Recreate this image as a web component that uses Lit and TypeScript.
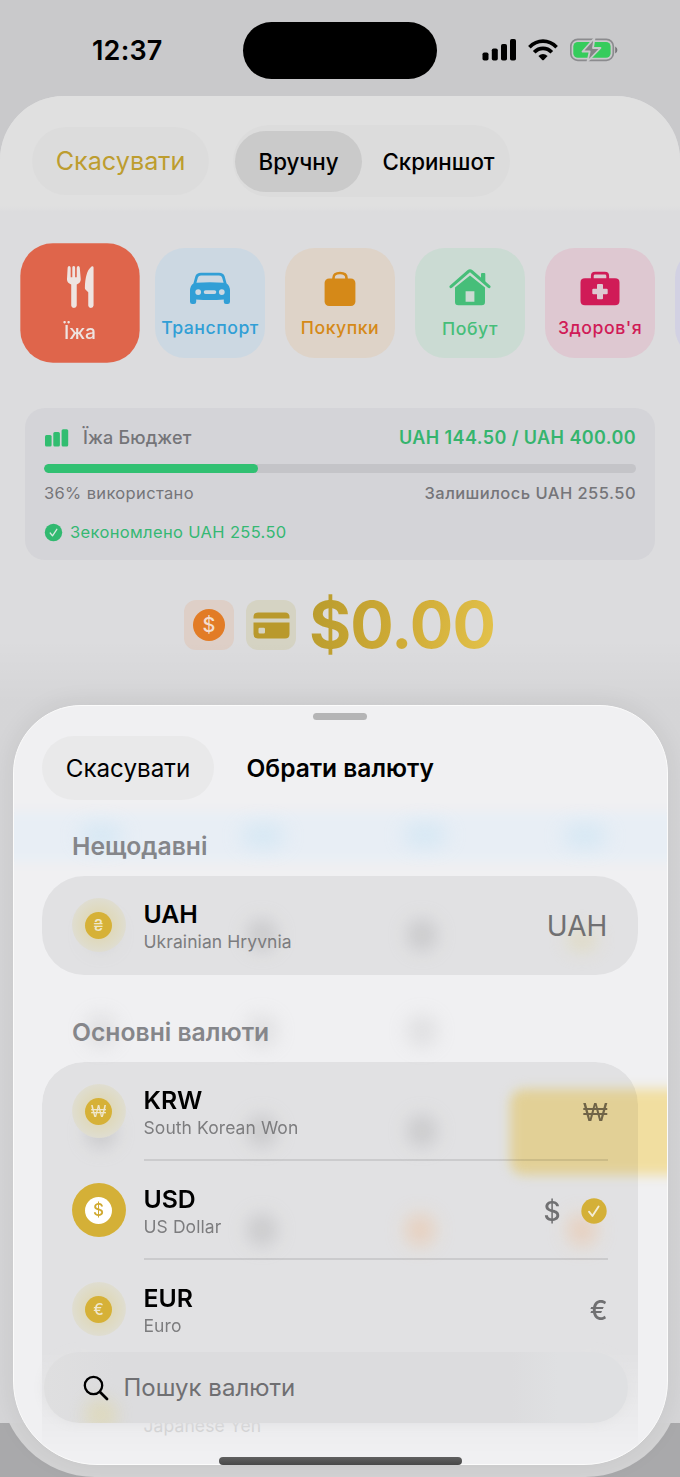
import { LitElement, html, css, svg, nothing } from "lit";
import { customElement, property } from "lit/decorators.js";
import { classMap } from "lit/directives/class-map.js";

const categoryIcons: Record<string, unknown> = {
  food: svg`<svg width="26" height="40" viewBox="0 0 26 40"><g fill="currentColor"><path d="M0.6 1.6Q.8 0 2 0T3.4 1.6V10.2H4.9V1.3Q5.1 0 6.2 0T7.5 1.3V10.2H9V1.6Q9.2 0 10.4 0T11.8 1.6L12.7 12.2Q12.7 15.6 9 17V36.3Q8.800 38.600 6.400 38.600T3.900 36.300V17Q0 15.600 0 12.200Z"/><path d="M24.500 1.200V36.300Q24.300 38.600 22 38.600T19.600 36.300V24L17 21.600Q16.400 21 16.500 19.600C16.800 11 18.200 4 22.600 .4Q24.200-.6 24.500 1.200Z"/></g></svg>`,
  car: svg`<svg width="42" height="33" viewBox="0 0 42 33"><path fill="currentColor" fill-rule="evenodd" d="M12 .8H30Q34.500.8 35.700 4.500L37.600 11.400Q41 13.800 41 18.800V29.700Q41 32 38.700 32H37Q34.800 32 34.800 29.700V27.400Q21 28.400 7.200 27.400V29.700Q7.200 32 5 32H3.300Q1 32 1 29.700V18.800Q1 13.800 4.400 11.400L6.300 4.500Q7.500.8 12 .8ZM12 3.600Q9.500 3.600 8.900 5.500L7.400 10.800Q21 9.800 34.600 10.800L33.100 5.500Q32.500 3.600 30 3.600ZM9.200 17.200A2.900 2.900 0 1 0 9.200 23A2.900 2.900 0 1 0 9.200 17.200ZM32.800 17.200A2.900 2.900 0 1 0 32.800 23A2.900 2.900 0 1 0 32.800 17.200ZM16.600 18.200A1.900 1.900 0 0 0 16.600 22H25.400A1.900 1.900 0 0 0 25.400 18.200Z"/></svg>`,
  bag: svg`<svg width="32" height="36" viewBox="0 0 32 36"><path d="M9.500 10V7Q9.500 2 16 2T22.500 7V10" fill="none" stroke="currentColor" stroke-width="2.600"/><rect x=".6" y="7.500" width="30.800" height="27.500" rx="4.500" fill="currentColor"/></svg>`,
  house: svg`<svg width="42" height="38" viewBox="0 0 42 38"><path d="M2 18.700L19.400 3.500Q21 2.100 22.600 3.500L40 18.700" fill="none" stroke="currentColor" stroke-width="3" stroke-linecap="round"/><path fill="currentColor" d="M32 6Q32 5 33 5H35.300Q36.300 5 36.300 6V14.500L32 10.700Z"/><path fill="currentColor" fill-rule="evenodd" d="M6 19.400L21 7.500L36 19.400V34Q36 37.300 32.700 37.300H9.300Q6 37.300 6 34ZM16.600 23.200V33.800H25.400V23.200Z"/></svg>`,
  kit: svg`<svg width="40" height="35" viewBox="0 0 40 35"><path d="M12.300 9V5Q12.300 2.200 15.100 2.200H24.900Q27.700 2.200 27.700 5V9" fill="none" stroke="currentColor" stroke-width="2.800"/><path fill="currentColor" fill-rule="evenodd" d="M5 7.300H35Q39.500 7.300 39.500 11.500V30Q39.500 34.200 35 34.200H5Q.5 34.200 .5 30V11.500Q.5 7.300 5 7.300ZM18 13Q17 13 17 14V17.700H13.300Q12.300 17.700 12.300 18.700V22.300Q12.300 23.300 13.300 23.300H17V27.300Q17 28.300 18 28.300H22Q23 28.300 23 27.300V23.300H26.700Q27.700 23.300 27.700 22.300V18.700Q27.700 17.700 26.700 17.700H23V14Q23 13 22 13Z"/></svg>`,
};

const categories = [
  { icon: "food", label: "Їжа" },
  { icon: "car", label: "Транспорт" },
  { icon: "bag", label: "Покупки" },
  { icon: "house", label: "Побут" },
  { icon: "kit", label: "Здоров'я" },
  { icon: "more", label: "" },
];

const currencies = [
  { code: "KRW", name: "South Korean Won", sign: "₩", selected: false },
  { code: "USD", name: "US Dollar", sign: "$", selected: true },
  { code: "EUR", name: "Euro", sign: "€", selected: false },
];

@customElement("currency-row")
class CurrencyRow extends LitElement {
  @property() code = "";
  @property() name = "";
  @property() sign = "";
  @property() mark = "";
  @property({ type: Boolean }) selected = false;

  static styles = css`
    :host { display: block; height: 99px; box-sizing: border-box; padding: 0 30px; }
    .row { display: flex; height: 100%; }
    .halo {
      align-self: center; width: 54px; height: 54px; border-radius: 50%; margin: 0 18px 1px 0;
      display: grid; place-items: center; background: radial-gradient(circle, #dfd8b8 30%, #dfdcca 60%, #dfddd2 72%);
    }
    .coin {
      width: 27px; height: 27px; border-radius: 50%; background: #d6b137; color: #efe7cd;
      display: grid; place-items: center; font-size: 15.500px; line-height: 27px; font-weight: 500;
    }
    .halo.on { background: #d4b037; }
    .on .coin { background: #fff; color: #d0a930; font-size: 17px; font-weight: 500; }
    .body { flex: 1; display: flex; align-items: center; box-sizing: border-box; }
    .names { flex: 1; padding-top: 4px; }
    .code { font-size: 24.800px; line-height: 28px; font-weight: 600; color: #000; }
    .name { font-size: 17.500px; line-height: 28px; letter-spacing: .08px; color: #7c7c7e; }
    .sign { font-size: 26.500px; line-height: 32px; font-weight: 500; color: #707072; }
    .code3 { font-size: 28px; font-weight: 400; letter-spacing: .1px; }
    .won { font-family: "Liberation Sans", sans-serif; font-size: 26px; font-weight: 400; color: #706447; }
    .coin.won { font-size: 16px; color: #efe7cd; }
    .check { margin-left: 20px; display: block; margin-right: 1px; }
  `;

  render() {
    const won = this.sign === "₩";
    return html`<div class="row">
      <div class=${classMap({ halo: true, on: this.selected })}><div class=${classMap({ coin: true, won })}>${this.mark || this.sign}</div></div>
      <div class="body">
        <div class="names"><div class="code">${this.code}</div><div class="name">${this.name}</div></div>
        <div class=${classMap({ sign: true, won, code3: this.sign.length > 1 })}>${this.sign}</div>
        ${this.selected
          ? html`<svg class="check" width="26" height="26" viewBox="0 0 26 26"><circle cx="13" cy="13" r="12.700" fill="#d4b037"/><path d="M8 13.700L11.400 18L17.600 8.500" fill="none" stroke="#f3ecd4" stroke-width="1.900" stroke-linecap="round" stroke-linejoin="round"/></svg>`
          : nothing}
      </div>
    </div>`;
  }
}

@customElement("app-root")
class AppRoot extends LitElement {
  static styles = css`
    :host {
      display: block; position: relative; width: 680px; height: 1477px; overflow: hidden;
      background: #c9c9cb; font-family: Inter, "Liberation Sans", sans-serif; color: #000;
    }
    * { box-sizing: border-box; }
    svg { display: block; }
    .status { display: flex; align-items: center; height: 96px; padding: 4px 62px 0 92px; }
    .time { width: 151px; font-size: 27px; font-weight: 600; line-height: 34px; letter-spacing: .2px; padding-top: 2px; }
    .island { width: 194px; height: 57px; border-radius: 29px; background: #000; }
    .signals { margin-left: auto; display: flex; align-items: center; gap: 12px; }

    .page { height: 1381px; background: #dcdcde; border-radius: 64px 64px 0 0; overflow: hidden; }
    .nav {
      display: flex; gap: 24px; height: 116px; padding: 31px 32px 0;
      background: linear-gradient(#e0e0e0 95%, #dcdcde);
    }
    .cancel {
      width: 177px; height: 68px; border-radius: 34px; background: #dcdcdc; color: #bd9d2f;
      font-size: 25.200px; line-height: 69px; text-align: center;
    }
    .segments { width: 277px; height: 72px; border-radius: 36px; background: #dcdcdc; display: flex; padding: 6px 2px; font-size: 22.300px; line-height: 62px; font-weight: 500; text-align: center; margin-top: -2px; }
    .seg { flex: 1; padding-left: 5px; }
    .seg.on { flex: 0 0 127px; height: 61px; border-radius: 31px; background: #cacaca; padding: 0; margin-right: 2px; }

    .tiles { display: flex; gap: 20px; padding: 36px 0 0 25px; width: 820px; }
    .tile {
      width: 110px; height: 110px; flex: none; border-radius: 30px; display: flex; flex-direction: column; align-items: center;
      font-size: 17.700px; font-weight: 500; white-space: nowrap; letter-spacing: .5px;
    }
    .glyph { height: 45px; margin-top: 18px; display: grid; place-items: center; }
    .label { line-height: 22px; margin-top: 6px; }
    .food { background: #df654b; color: #eee4e1; transform: scale(1.085); letter-spacing: 0; }
    .food .glyph { margin-top: 18px; padding-left: 2px; }
    .food .label { margin-top: 7.500px; }
    .car { background: #ccd8e2; color: #319fd6; }
    .bag { background: #ded3c8; color: #d58918; }
    .house { background: #cbdbd3; color: #46be79; }
    .house .glyph { margin-top: 16.500px; }
    .house .label { margin-top: 8.500px; }
    .kit { background: #dec8d1; color: #d01b57; }
    .more { background: #d2d1e3; }

    .budget { margin: 50px 25px 0; height: 152px; border-radius: 20px; background: #d4d4d8; padding: 15px 19px 0; color: #757579; }
    .line { display: flex; justify-content: space-between; align-items: center; }
    .heading { display: flex; align-items: center; gap: 14px; font-size: 18px; line-height: 29px; height: 28px; font-weight: 500; letter-spacing: .15px; }
    .heading svg { margin-top: 1px; }
    .total { color: #35b46e; font-size: 18px; font-weight: 600; letter-spacing: .4px; }
    .track { height: 9px; margin: 13px 0 8px; border-radius: 5px; background: #c4c4c8; overflow: hidden; }
    .fill { height: 100%; border-radius: 5px; background: #31c072; }
    .small { font-size: 16.500px; line-height: 23px; height: 24px; letter-spacing: .35px; }
    .left { font-weight: 500; letter-spacing: .45px; }
    .saved { display: flex; align-items: center; gap: 7px; margin-top: 15px; color: #35b873; }

    .amount { display: flex; align-items: center; justify-content: flex-start; gap: 12px; margin: 25px 0 0 184px; height: 80px; }
    .chip { width: 50px; height: 50px; border-radius: 12px; display: grid; place-items: center; background: #decfc7; }
    .chip.card { background: #d5d3c3; }
    .dollar { width: 32px; height: 32px; border-radius: 50%; background: #e27c26; color: #f3ded0; font-size: 20px; font-weight: 500; line-height: 32px; text-align: center; }
    .value {
      margin: -1px 0 0 1px; font-size: 64.500px; line-height: 80px; font-weight: 700; letter-spacing: -.9px;
      background: linear-gradient(105deg, #b89b2d, #cfab36 50%, #e4c34c); -webkit-background-clip: text; background-clip: text; color: transparent;
    }

    .shade { position: absolute; inset: 640px 0 0; background: linear-gradient(#0000, #00000008 60px); }
    .corners { position: absolute; left: 0; right: 0; top: 1423px; height: 54px; background: #a9a9ab; overflow: hidden; }
    .corners::before { content: ""; position: absolute; inset: -246px 0 0; border-radius: 0 0 95px 95px; background: #d4d4d5; }

    .sheet {
      position: absolute; left: 12.500px; top: 705px; width: 655px; height: 760px; overflow: hidden;
      border: 1.500px solid #fbfbfb; border-radius: 68px 68px 84px 84px; background: #f0f0f2;
      box-shadow: 0 0 26px #00000014;
    }
    .blur { position: absolute; inset: 0; }
    .band { position: absolute; left: -10px; right: -10px; top: 106px; height: 50px; background: #e8eef5; filter: blur(5px); }
    .spot { position: absolute; width: 30px; height: 32px; border-radius: 50%; filter: blur(10px); background: #a9a9ab; opacity: .38; }
    .sky { background: #bcdff3; width: 46px; height: 24px; opacity: .42; }
    .peach { background: #fccfaa; opacity: .6; }
    .lemon { background: #eddc9c; opacity: .45; height: 22px; }
    .dim { opacity: .25; }
    .gold { position: absolute; left: 496px; top: 383px; width: 200px; height: 86px; border-radius: 14px; background: #f1dea0; filter: blur(6px); }
    .content { position: absolute; inset: 0; padding: 0 28px; }
    .grab { width: 54px; height: 7px; border-radius: 4px; background: #b5b5b6; margin: 7px auto 0; }
    .top { display: flex; align-items: center; gap: 33px; margin-top: 16px; }
    .close { width: 172px; height: 64px; border-radius: 32px; background: #e9e9ea; font-size: 24.200px; line-height: 66px; text-align: center; padding-left: 1px; }
    .title { font-size: 24.500px; line-height: 65px; height: 64px; font-weight: 600; }
    .section { font-size: 24.700px; line-height: 32px; font-weight: 600; color: #85868a; padding: 0 30.500px; margin-top: 30px; }
    .list { margin-top: 14px; border-radius: 42px; background: #0000000f; width: 596px; overflow: hidden; }
    .second { margin-top: 41px; }
    .long { border-radius: 42px 42px 0 0; height: 398px; margin-top: 14px; -webkit-mask-image: linear-gradient(#000 290px, #0007 345px, #0000 392px); mask-image: linear-gradient(#000 290px, #0007 345px, #0000 392px); }
    .divided { position: relative; }
    .divided + .divided::before { content: ""; position: absolute; left: 102px; right: 30px; top: -2px; height: 1.500px; background: #0000001a; }
    .next { position: absolute; left: 130px; top: 706px; font-size: 17.500px; line-height: 28px; letter-spacing: .1px; color: #d2d2d3; }
    .search {
      position: absolute; left: 30px; top: 646px; width: 584px; height: 71px; border-radius: 35px; overflow: hidden;
      background: linear-gradient(90deg, #dfdfe0, #dcdcde 12% 80%, #dfe0e2 88%); box-shadow: 0 0 12px #e2e2e3; display: flex; align-items: center; gap: 15px; padding: 0 0 0 39px;
      font-size: 24px; color: #6f6f72;
    }
    .search svg, .search span { position: relative; z-index: 1; }
    .search::after { content: ""; position: absolute; left: 40px; top: 46px; width: 34px; height: 34px; border-radius: 50%; background: #e0d48b; opacity: .35; filter: blur(8px); }
    .home { position: absolute; left: 219px; top: 1457px; width: 243px; height: 8px; border-radius: 4px; background: linear-gradient(#606060, #484848); }
  `;

  private spot(kind: string, x: number, y: number) {
    return html`<div class="spot ${kind}" style="left:${x}px;top:${y}px"></div>`;
  }

  render() {
    return html`
      <div class="status">
        <div class="time">12:37</div>
        <div class="island"></div>
        <div class="signals">
          <svg width="35" height="22" viewBox="0 0 35 22"><rect x="1.500" y="13.500" width="6" height="8" rx="1.800"/><rect x="10.800" y="9.500" width="6" height="12" rx="1.800"/><rect x="20" y="5" width="6" height="16.500" rx="1.800"/><rect x="29" y="0" width="6" height="21.500" rx="1.800"/></svg>
          <svg width="30" height="22" viewBox="0 0 30 22"><g fill="none" stroke="#000" stroke-width="3.700"><path d="M1.400 8.200Q7.500 2.200 15 2.200T28.600 8.200"/><path d="M6.200 13.300Q10 9.400 15 9.400T23.800 13.300"/></g><path d="M10.400 17Q15 12.900 19.600 17L15.800 20.900Q15 21.600 14.200 20.900Z"/></svg>
          <svg width="48" height="26" viewBox="0 0 48 26"><rect x="0" y="2.300" width="42.500" height="21" rx="7" fill="none" stroke="#8b8b8e" stroke-width="1.700" transform="translate(.8 0)"/><rect x="3.300" y="4.900" width="37.300" height="15.800" rx="4.500" fill="#36cc5c"/><path d="M45.200 9.500Q47.400 10.500 47.400 13T45.200 16.500Z" fill="#77777a"/><path d="M24.500 1L12.500 14.500H19.700L17.500 24.500L30.500 11H23Z" fill="#858587" stroke="#c9c9cb" stroke-width="1.800" stroke-linejoin="round"/></svg>
        </div>
      </div>
      <div class="page">
        <div class="nav">
          <div class="cancel">Скасувати</div>
          <div class="segments"><div class="seg on">Вручну</div><div class="seg">Скриншот</div></div>
        </div>
        <div class="tiles">
          ${categories.map((c) => html`<div class="tile ${c.icon}"><div class="glyph">${categoryIcons[c.icon] ?? nothing}</div><div class="label">${c.label}</div></div>`)}
        </div>
        <div class="budget">
          <div class="line">
            <div class="heading"><svg width="25" height="18" viewBox="0 0 25 18" fill="#31bd70"><rect x="1" y="6" width="6.600" height="11.500" rx="1.500"/><rect x="9.300" y="3" width="6.600" height="14.500" rx="1.500"/><rect x="17.600" y=".3" width="6.600" height="17.200" rx="1.500"/></svg><span>Їжа Бюджет</span></div>
            <div class="total">UAH 144.50 / UAH 400.00</div>
          </div>
          <div class="track"><div class="fill" style="width:36.125%"></div></div>
          <div class="line small"><span>36% використано</span><span class="left">Залишилось UAH 255.50</span></div>
          <div class="saved small"><svg width="19" height="19" viewBox="0 0 19 19"><circle cx="9.500" cy="9.500" r="8.700" fill="#31b970"/><path d="M6.200 10L8.500 12.800L12.800 6.300" fill="none" stroke="#d9e8e0" stroke-width="1.300" stroke-linecap="round" stroke-linejoin="round"/></svg><span>Зекономлено UAH 255.50</span></div>
        </div>
        <div class="amount">
          <div class="chip"><div class="dollar">$</div></div>
          <div class="chip card"><svg width="37" height="27" viewBox="0 0 37 27" fill="#b9992c"><path d="M5 .5H32Q36.500.5 36.500 5V6.600H.5V5Q.5.5 5 .5Z"/><path fill-rule="evenodd" d="M.5 10.600H36.500V22Q36.500 26.500 32 26.500H5Q.5 26.500 .5 22ZM6.800 15.700Q5.500 15.700 5.500 17V20.200Q5.500 21.500 6.800 21.500H10.700Q12 21.500 12 20.200V17Q12 15.700 10.700 15.700Z"/></svg></div>
          <div class="value">$0.00</div>
        </div>
      </div>
      <div class="shade"></div>
      <div class="corners"></div>
      <div class="sheet">
        <div class="blur">
          <div class="band"></div>
          ${this.spot("sky", 64, 118)}${this.spot("sky", 226, 118)}${this.spot("sky", 388, 117)}${this.spot("sky", 548, 118)}
          ${this.spot("dim", 72, 212)}${this.spot("", 233, 213)}${this.spot("", 393, 213)}${this.spot("lemon", 553, 223)}
          ${this.spot("dim", 72, 309)}${this.spot("dim", 233, 309)}${this.spot("dim", 393, 309)}
          ${this.spot("", 72, 410)}${this.spot("", 233, 409)}${this.spot("", 393, 409)}
          ${this.spot("", 233, 508)}${this.spot("peach", 391, 508)}${this.spot("peach", 553, 508)}
          <div class="gold"></div>
        </div>
        <div class="content">
          <div class="grab"></div>
          <div class="top"><div class="close">Скасувати</div><div class="title">Обрати валюту</div></div>
          <div class="section">Нещодавні</div>
          <div class="list"><currency-row code="UAH" name="Ukrainian Hryvnia" sign="UAH" mark="₴"></currency-row></div>
          <div class="section second">Основні валюти</div>
          <div class="list long">
            ${currencies.map((c) => html`<currency-row class="divided" .code=${c.code} .name=${c.name} .sign=${c.sign} ?selected=${c.selected}></currency-row>`)}
          </div>
          <div class="next">Japanese Yen</div>
        </div>
        <div class="search">
          <svg width="26" height="26" viewBox="0 0 26 26"><circle cx="10.500" cy="10.500" r="8.700" fill="none" stroke="#000" stroke-width="2.300"/><path d="M17 17L24 24" stroke="#000" stroke-width="2.800" stroke-linecap="round"/></svg>
          <span>Пошук валюти</span>
        </div>
      </div>
      <div class="home"></div>
    `;
  }
}
